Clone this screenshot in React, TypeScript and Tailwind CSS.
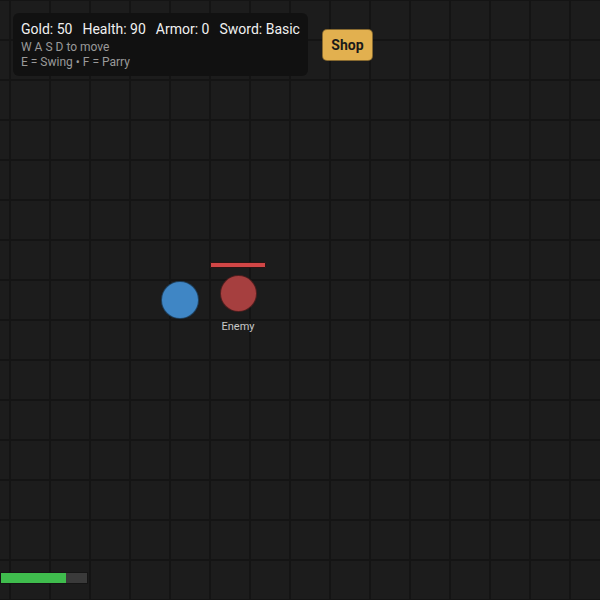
const stats = [
  { label: 'Gold', value: '50' },
  { label: 'Health', value: '90' },
  { label: 'Armor', value: '0' },
  { label: 'Sword', value: 'Basic' },
];

function Hud() {
  return (
    <div className="absolute top-[13px] left-[13px] flex items-start gap-[14px]">
      <div className="rounded-[6px] bg-[#111111]/90 px-2 pt-[7px] pb-[6px]">
        <div className="flex gap-[10px] text-[14px] leading-[18px] text-[#f0f0f0]">
          {stats.map((s) => (
            <span key={s.label}>
              {s.label}: {s.value}
            </span>
          ))}
        </div>
        <div className="mt-[2px] text-[12px] leading-[15px] text-[#9a9a9a]">
          <p>W A S D to move</p>
          <p>E = Swing • F = Parry</p>
        </div>
      </div>
      <button className="mt-[16px] h-[32px] w-[51px] rounded-[5px] border border-black/40 bg-[#e2b04f] text-[14px] font-bold text-[#1a1a1a]">
        Shop
      </button>
    </div>
  );
}

function Enemy() {
  return (
    <div className="absolute left-[208px] top-[262px] flex w-[60px] flex-col items-center">
      <div className="h-[6px] w-[56px] rounded-[1px] border border-[#2a1414] bg-[#d24646]" />
      <div className="mt-[7px] h-[37px] w-[37px] rounded-full border border-black/50 bg-[#a63f3f]" />
      <span className="mt-[8px] text-[11px] leading-[13px] text-[#c8c8c8]">Enemy</span>
    </div>
  );
}

export default function App() {
  return (
    <div
      className="relative h-[600px] w-[600px] overflow-hidden bg-[#1c1c1c] bg-[linear-gradient(to_right,#141414_2px,transparent_2px),linear-gradient(to_bottom,#141414_2px,transparent_2px)] bg-[length:40px_40px] bg-[position:9px_-1px]"
      style={{ fontFamily: 'Roboto, "Liberation Sans", sans-serif' }}
    >
      <Hud />

      {/* player */}
      <div className="absolute left-[161px] top-[281px] h-[38px] w-[38px] rounded-full border border-black/50 bg-[#3f86c5]" />

      <Enemy />

      {/* own health */}
      <div className="absolute bottom-[16px] left-0 h-[12px] w-[88px] border border-[#151515] bg-[#3a3a3a]">
        <div className="h-full w-[76%] bg-[#3fbc4d]" />
      </div>
    </div>
  );
}
